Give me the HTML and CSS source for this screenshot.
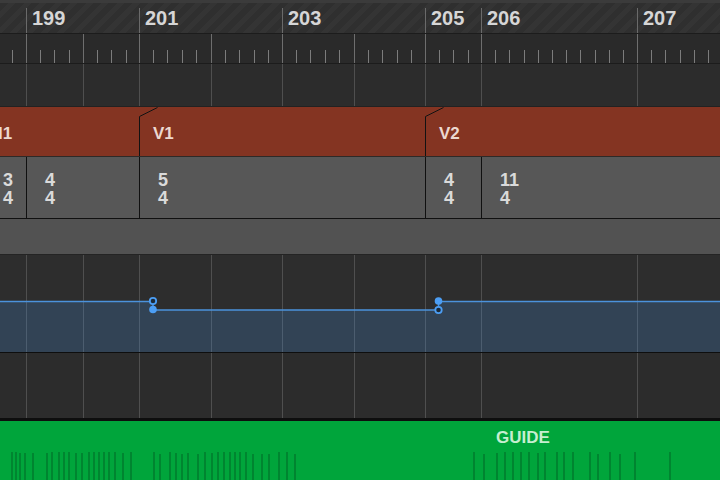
FILE: index.html
```html
<!DOCTYPE html>
<html lang="en">
<head>
<meta charset="utf-8">
<title>Arrangement</title>
<link rel="stylesheet" href="styles.css">
</head>
<body>
<div class="timeline">
  <div class="ruler-top">
    <div class="mark"></div>
    <div class="mark num">199</div>
    <div class="mark num">201</div>
    <div class="mark num">203</div>
    <div class="mark num">205</div>
    <div class="mark num">206</div>
    <div class="mark num">207</div>
  </div>

  <div class="ruler-beats grid">
    <div class="bar lead"><i></i><i></i></div>
    <div class="bar"><i></i><i></i><i></i><i></i></div>
    <div class="bar"><i></i><i></i><i></i><i></i></div>
    <div class="bar"><i></i><i></i><i></i><i></i><i></i></div>
    <div class="bar"><i></i><i></i><i></i><i></i><i></i></div>
    <div class="bar"><i></i><i></i><i></i><i></i><i></i></div>
    <div class="bar"><i></i><i></i><i></i><i></i><i></i></div>
    <div class="bar"><i></i><i></i><i></i><i></i></div>
    <div class="bar"><i></i><i></i><i></i><i></i><i></i><i></i><i></i><i></i><i></i><i></i><i></i></div>
    <div class="bar"><i></i><i></i><i></i><i></i><i></i><i></i></div>
  </div>

  <div class="track grid">
    <div></div><div></div><div></div><div></div><div></div>
    <div></div><div></div><div></div><div></div><div></div>
  </div>

  <div class="sections">
    <div class="section"><span class="label cut">I1</span></div>
    <div class="section">
      <svg class="notch" width="20" height="49" viewBox="0 0 20 49"><path d="M0.5 49 V9.5 L18.5 0.5"/></svg>
      <span class="label">V1</span>
    </div>
    <div class="section">
      <svg class="notch" width="20" height="49" viewBox="0 0 20 49"><path d="M0.5 49 V9.5 L18.5 0.5"/></svg>
      <span class="label">V2</span>
    </div>
  </div>

  <div class="signatures">
    <div class="sig first"><span>3</span><span>4</span></div>
    <div class="sig"><span>4</span><span>4</span></div>
    <div class="sig"><span>5</span><span>4</span></div>
    <div class="sig"><span>4</span><span>4</span></div>
    <div class="sig"><span>11</span><span>4</span></div>
  </div>

  <div class="global"></div>

  <div class="automation grid">
    <div></div><div></div><div></div><div></div><div></div>
    <div></div><div></div><div></div><div></div><div></div>
    <svg class="curve" width="720" height="97" viewBox="0 0 720 97">
      <path class="area" d="M0 46.5 H153 V55 H438.5 V46.5 H720 V97 H0 Z"/>
      <path class="line" d="M0 46.5 H153 V55 H438.5 V46.5 H720"/>
      <circle class="hollow" cx="153" cy="46" r="3.2"/>
      <circle class="dot" cx="153" cy="54.5" r="3.8"/>
      <circle class="dot" cx="438.5" cy="46" r="3.8"/>
      <circle class="hollow" cx="438.5" cy="55" r="3.2"/>
    </svg>
  </div>

  <div class="track grid lower">
    <div></div><div></div><div></div><div></div><div></div>
    <div></div><div></div><div></div><div></div><div></div>
  </div>

  <div class="region">
    <div class="region-name">GUIDE</div>
    <svg class="wave" width="720" height="29" viewBox="0 0 720 29">
      <g>
        <rect x="11" y="1" width="2" height="28"/><rect x="15" y="1" width="2" height="28"/>
        <rect x="19" y="2" width="2" height="27"/><rect x="24" y="2" width="2" height="27"/>
        <rect x="32" y="2" width="2" height="27"/><rect x="46" y="2" width="2" height="27"/>
        <rect x="51" y="1" width="2" height="28"/><rect x="58" y="1" width="2" height="28"/>
        <rect x="63" y="1" width="2" height="28"/><rect x="68" y="1" width="2" height="28"/>
        <rect x="75" y="2" width="2" height="27"/><rect x="81" y="2" width="2" height="27"/>
        <rect x="88" y="1" width="2" height="28"/><rect x="93" y="1" width="2" height="28"/>
        <rect x="98" y="1" width="2" height="28"/><rect x="103" y="1" width="2" height="28"/>
        <rect x="108" y="1" width="2" height="28"/><rect x="114" y="1" width="2" height="28"/>
        <rect x="122" y="2" width="2" height="27"/><rect x="130" y="1" width="2" height="28"/>
        <rect x="153" y="1" width="2" height="28"/><rect x="159" y="3" width="2" height="26"/>
        <rect x="169" y="1" width="2" height="28"/><rect x="175" y="2" width="2" height="27"/>
        <rect x="181" y="3" width="2" height="26"/><rect x="187" y="2" width="2" height="27"/>
        <rect x="197" y="3" width="2" height="26"/><rect x="204" y="1" width="2" height="28"/>
        <rect x="211" y="2" width="2" height="27"/><rect x="217" y="1" width="2" height="28"/>
        <rect x="223" y="1" width="2" height="28"/><rect x="229" y="1" width="2" height="28"/>
        <rect x="234" y="1" width="2" height="28"/><rect x="239" y="1" width="2" height="28"/>
        <rect x="245" y="1" width="2" height="28"/><rect x="252" y="3" width="2" height="26"/>
        <rect x="261" y="3" width="2" height="26"/><rect x="268" y="3" width="2" height="26"/>
        <rect x="278" y="1" width="2" height="28"/><rect x="286" y="1" width="2" height="28"/>
        <rect x="294" y="3" width="2" height="26"/>
        <rect x="473" y="1" width="2" height="28"/><rect x="483" y="3" width="2" height="26"/>
        <rect x="496" y="2" width="2" height="27"/><rect x="504" y="1" width="2" height="28"/>
        <rect x="512" y="1" width="2" height="28"/><rect x="520" y="1" width="2" height="28"/>
        <rect x="528" y="1" width="2" height="28"/><rect x="537" y="2" width="2" height="27"/>
        <rect x="544" y="1" width="2" height="28"/><rect x="556" y="1" width="2" height="28"/>
        <rect x="563" y="1" width="2" height="28"/><rect x="572" y="1" width="2" height="28"/>
        <rect x="589" y="1" width="2" height="28"/><rect x="597" y="3" width="2" height="26"/>
        <rect x="609" y="1" width="2" height="28"/><rect x="619" y="3" width="2" height="26"/>
        <rect x="634" y="1" width="2" height="28"/><rect x="669" y="1" width="2" height="28"/>
      </g>
    </svg>
  </div>
</div>
</body>
</html>
```

FILE: styles.css
```css
html, body {
  margin: 0;
  padding: 0;
  background: #2d2d2d;
  overflow: hidden;
}

.timeline {
  width: 720px;
  height: 480px;
  display: flex;
  flex-direction: column;
  font-family: "Liberation Sans", Arial, sans-serif;
  font-weight: bold;
  overflow: hidden;
}

/* ---------- ruler ---------- */
.ruler-top {
  box-sizing: border-box;
  height: 34px;
  border-top: 3px solid #3b3b3b;
  border-bottom: 1px solid #1c1c1c;
  background: repeating-linear-gradient(135deg, #2f2f2f 0 6px, #343434 6px 11px);
  display: grid;
  grid-template-columns: 26px 113px 143px 143px 56px 156px 1fr;
}

.mark {
  margin-top: 5px;
}

.mark.num {
  border-left: 1px solid #6a6a6a;
  padding-left: 5px;
  font-size: 20px;
  line-height: 20px;
  color: #d6d6d6;
}

.grid {
  display: grid;
  grid-template-columns: 26px 57px 56px 72px 71px 72px 71px 56px 156px 1fr;
}

.ruler-beats {
  box-sizing: border-box;
  height: 30px;
  border-bottom: 1px solid #1c1c1c;
  background: #2a2a2a;
}

.bar {
  display: flex;
  align-items: flex-end;
}

.bar + .bar {
  border-left: 1px solid #6e6e6e;
}

.bar i {
  flex: none;
  box-sizing: border-box;
  width: 14.2px;
  height: 13px;
}

.bar i:first-child {
  width: 13.2px;
}

.bar.lead i:first-child {
  width: 12px;
}

.bar i + i {
  border-left: 1px solid #7c7c7c;
}

/* ---------- tracks ---------- */
.track {
  box-sizing: border-box;
  height: 43px;
  background: #2c2c2c;
  border-bottom: 1px solid #222;
}

.track > div + div,
.automation > div + div {
  border-left: 1px solid #4f4f4f;
}

.track.lower {
  height: 68px;
  border-bottom: 3px solid #0e0e0e;
}

/* ---------- sections ---------- */
.sections {
  box-sizing: border-box;
  height: 50px;
  background: #843422;
  border-bottom: 1px solid #2e2a28;
  display: grid;
  grid-template-columns: 139px 286px 1fr;
}

.section {
  position: relative;
  padding: 18px 0 0 14px;
}

.section:first-child {
  padding-left: 0;
}

.label {
  font-size: 17px;
  line-height: 17px;
  color: #ecd8d0;
}

.label.cut {
  margin-left: -2px;
}

.notch {
  position: absolute;
  left: 0;
  top: 0;
}

.notch path {
  fill: none;
  stroke: #121212;
  stroke-width: 1;
}

/* ---------- signatures ---------- */
.signatures {
  box-sizing: border-box;
  height: 62px;
  background: #575757;
  border-bottom: 1px solid #101010;
  display: grid;
  grid-template-columns: 26px 113px 286px 56px 1fr;
}

.sig {
  display: flex;
  flex-direction: column;
  align-items: flex-start;
  padding: 14px 0 0 18px;
  font-size: 18px;
  line-height: 18px;
  color: #dadada;
}

.sig.first {
  padding-left: 3px;
}

.sig + .sig {
  border-left: 1px solid #101010;
}

.global {
  box-sizing: border-box;
  height: 36px;
  background: #525252;
  border-bottom: 1px solid #242424;
}

/* ---------- automation ---------- */
.automation {
  position: relative;
  box-sizing: border-box;
  height: 98px;
  background: #2d2d2d;
  border-bottom: 1px solid #0e0e0e;
}

.curve {
  position: absolute;
  left: 0;
  top: 0;
}

.curve .area {
  fill: rgba(66, 140, 212, 0.24);
}

.curve .line {
  fill: none;
  stroke: #4b92dc;
  stroke-width: 1.5;
}

.curve .dot {
  fill: #4c9ef4;
}

.curve .hollow {
  fill: #1c2a38;
  stroke: #4c9ef4;
  stroke-width: 1.8;
}

/* ---------- region ---------- */
.region {
  flex: 1;
  background: #00a53b;
  display: flex;
  flex-direction: column;
}

.region-name {
  padding: 8px 0 0 496px;
  font-size: 17px;
  line-height: 17px;
  color: #c6eed0;
}

.wave {
  display: block;
  margin-top: auto;
}

.wave rect {
  fill: #008530;
}
```
